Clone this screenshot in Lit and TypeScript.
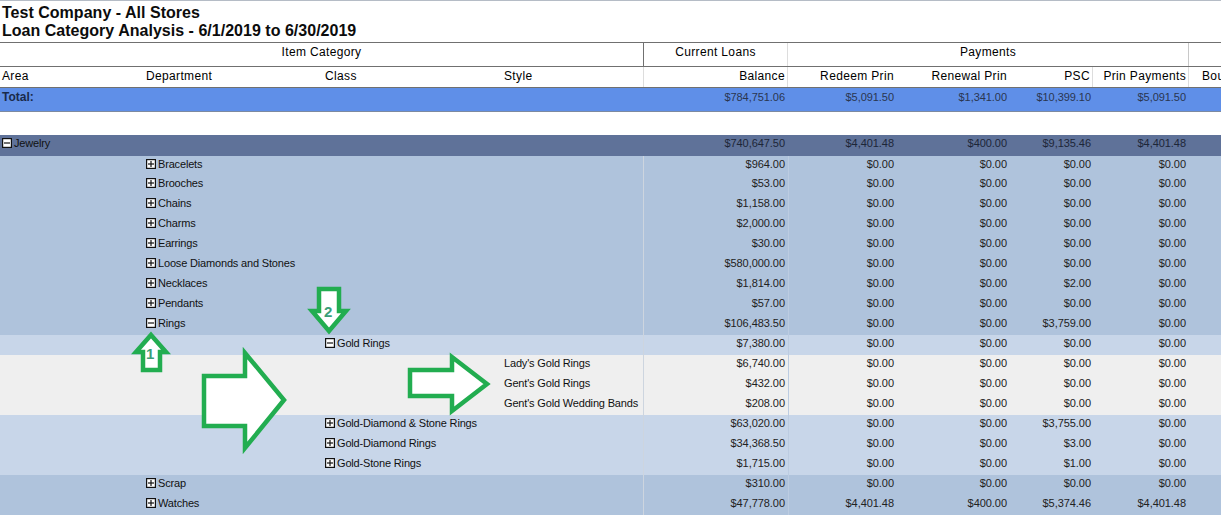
import { LitElement, html, css, svg } from "lit";
import { customElement } from "lit/decorators.js";

type R = { k: string; label: string; lvl: number; icon?: string; v: string[] };
const z = (b: string, p = "$0.00") => [b, "$0.00", "$0.00", p, "$0.00"];
const rows: R[] = [
  { k: "jew", label: "Jewelry", lvl: 0, icon: "m", v: ["$740,647.50", "$4,401.48", "$400.00", "$9,135.46", "$4,401.48"] },
  { k: "dep first", label: "Bracelets", lvl: 1, icon: "p", v: z("$964.00") },
  { k: "dep", label: "Brooches", lvl: 1, icon: "p", v: z("$53.00") },
  { k: "dep", label: "Chains", lvl: 1, icon: "p", v: z("$1,158.00") },
  { k: "dep", label: "Charms", lvl: 1, icon: "p", v: z("$2,000.00") },
  { k: "dep", label: "Earrings", lvl: 1, icon: "p", v: z("$30.00") },
  { k: "dep", label: "Loose Diamonds and Stones", lvl: 1, icon: "p", v: z("$580,000.00") },
  { k: "dep", label: "Necklaces", lvl: 1, icon: "p", v: z("$1,814.00", "$2.00") },
  { k: "dep", label: "Pendants", lvl: 1, icon: "p", v: z("$57.00") },
  { k: "dep", label: "Rings", lvl: 1, icon: "m", v: z("$106,483.50", "$3,759.00") },
  { k: "cls", label: "Gold Rings", lvl: 2, icon: "m", v: z("$7,380.00") },
  { k: "sty", label: "Lady's Gold Rings", lvl: 3, v: z("$6,740.00") },
  { k: "sty", label: "Gent's Gold Rings", lvl: 3, v: z("$432.00") },
  { k: "sty", label: "Gent's Gold Wedding Bands", lvl: 3, v: z("$208.00") },
  { k: "cls", label: "Gold-Diamond & Stone Rings", lvl: 2, icon: "p", v: z("$63,020.00", "$3,755.00") },
  { k: "cls", label: "Gold-Diamond Rings", lvl: 2, icon: "p", v: z("$34,368.50", "$3.00") },
  { k: "cls", label: "Gold-Stone Rings", lvl: 2, icon: "p", v: z("$1,715.00", "$1.00") },
  { k: "dep", label: "Scrap", lvl: 1, icon: "p", v: z("$310.00") },
  { k: "dep", label: "Watches", lvl: 1, icon: "p", v: ["$47,778.00", "$4,401.48", "$400.00", "$5,374.46", "$4,401.48"] },
];

const arrows = [
  "M319 289H339V311H346L329 331L312 311H319Z",
  "M151 335L166 352H160V370H143V352H136Z",
  "M204 376H245V353L284 400L245 448V426H204Z",
  "M410 370H452V357L487 384L452 411V396H410Z",
];

@customElement("app-root")
export class AppRoot extends LitElement {
  static styles = css`
    :host { display: block; width: 1221px; height: 517px; overflow: hidden; position: relative; background: #fff;
      font-family: "Liberation Sans", Arial, sans-serif; color: #111; }
    .top { height: 1px; background: #b5bcc6; margin-bottom: 3px; }
    .title { font-size: 16px; font-weight: bold; line-height: 18px; padding-left: 2px; height: 38px; color: #0c0c0c; letter-spacing: .02px; }
    .row { display: grid; grid-template-columns: 146px 179px 179px 139px 145px 108px 113px 84px 96px 32px; white-space: nowrap; }
    .h1 { height: 23px; border-top: 1px solid #707070; border-bottom: 1px solid #707070; font-size: 12px; line-height: 18px; letter-spacing: .35px; color: #000; }
    .h2 { height: 20px; border-bottom: 1px solid #707070; font-size: 12px; line-height: 18px; letter-spacing: .35px; color: #000; }
    .span4 { grid-column: span 4; text-align: center; }
    .h1 .cl { text-align: center; border-left: 1px solid #707070; border-right: 1px solid #ddd; }
    .h1 .pay { grid-column: span 4; text-align: center; border-right: 1px solid #c8c8c8; }
    .h2 .area { padding-left: 2px; }
    .h2 .bou { padding-left: 13px; overflow: hidden; }
    .h2 .r { text-align: right; padding: 0 2px 0 0; }
    .h2 .bl { border-left: 1px solid #ddd; }
    .h2 .br { border-right: 1px solid #ddd; }
    .total { height: 23px; background: #5f8fe8; border-bottom: 1px solid #7d8aa0; font-size: 11px; line-height: 18px; margin-bottom: 23px; letter-spacing: -.05px; }
    .total > div:first-child { padding-left: 2px; font-weight: bold; grid-column: span 4; font-size: 12px; color: #1a2a4a; letter-spacing: 0; }
    .data { font-size: 11px; line-height: 16px; height: 20px; letter-spacing: -.05px; }
    .jew { background: #5f7299; height: 21px; }
    .first { height: 19px; }
    .dep { background: #afc3dc; }
    .cls { background: #c8d6e9; }
    .sty { background: #efefef; }
    .r { text-align: right; padding-right: 2px; }
    .wide { padding-right: 3px; }
    .num { color: #222; }
    .total .num { color: #2a3650; }
    .jew .num { color: #1d2638; }
    .sep { border-left: 1px solid #cdd5df; }
    .sep2 { border-left: 1px solid #bccce1; }
    .jew .sep, .jew .sep2 { border-left-color: transparent; }
    .lab { display: flex; align-items: center; height: 16px; grid-column: span 4; letter-spacing: -.17px; }
    .lab.l0 { padding-left: 2px; }
    .lab.l1 { padding-left: 146px; }
    .lab.l2 { padding-left: 325px; }
    .lab.l3 { padding-left: 504px; }
    .ico { width: 10px; height: 10px; display: block; flex: none; margin-right: 2px; }
    .over { position: absolute; left: 0; top: 0; width: 1221px; height: 517px; pointer-events: none; }
    .tag { font: bold 15px "Liberation Sans", Arial, sans-serif; fill: #3a9e78; }
  `;

  icon(t?: string) {
    if (!t) return "";
    return html`<svg class="ico" viewBox="0 0 10 10">
      <rect x=".6" y=".6" width="8.8" height="8.8" fill="#fff" stroke="#111" stroke-width="1.2" />
      <path d="M2 5H8" stroke="#111" stroke-width="1.2" />
      ${t === "p" ? svg`<path d="M5 2V8" stroke="#111" stroke-width="1.2" />` : ""}
    </svg>`;
  }

  render() {
    return html`
      <div class="top"></div>
      <div class="title">Test Company - All Stores<br />Loan Category Analysis - 6/1/2019 to 6/30/2019</div>
      <div class="row h1">
        <div class="span4">Item Category</div>
        <div class="cl">Current Loans</div>
        <div class="pay">Payments</div>
        <div></div>
      </div>
      <div class="row h2">
        <div class="area">Area</div><div>Department</div><div>Class</div><div>Style</div>
        <div class="r bl br">Balance</div>
        <div class="r">Redeem Prin</div>
        <div class="r">Renewal Prin</div>
        <div class="r br">PSC</div>
        <div class="r br">Prin Payments</div>
        <div class="bou">Bou</div>
      </div>
      <div class="row total">
        <div>Total:</div>
        <div class="r num wide">$784,751.06</div><div class="r num">$5,091.50</div><div class="r num">$1,341.00</div><div class="r num">$10,399.10</div><div class="r num wide">$5,091.50</div><div></div>
      </div>
      ${rows.map(
        (r) => html`<div class="row data ${r.k}">
          <div class="lab l${r.lvl}">${this.icon(r.icon)}<span>${r.label}</span></div>
          ${r.v.map((x, i) => html`<div class="r num ${i === 0 ? "sep wide" : i === 1 ? "sep2" : i === 4 ? "wide" : ""}">${x}</div>`)}
          <div></div>
        </div>`
      )}
      <svg class="over" viewBox="0 0 1221 517">
        ${arrows.map((d) => svg`<path d=${d} fill="#fff" stroke="#22ad50" stroke-width="4.5" stroke-linejoin="miter" />`)}
        <text class="tag" x="324" y="317">2</text>
        <text class="tag" x="146" y="359">1</text>
      </svg>
    `;
  }
}
